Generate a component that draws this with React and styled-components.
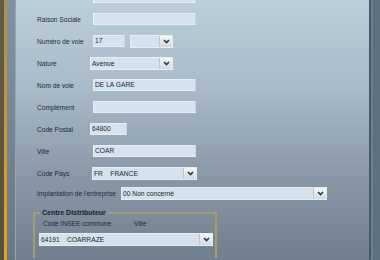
import React from 'react';
import styled, { createGlobalStyle } from 'styled-components';

var Global = createGlobalStyle`
  html, body {
    margin: 0;
    padding: 0;
    width: 380px;
    height: 260px;
    overflow: hidden;
    font-family: "Liberation Sans", Arial, sans-serif;
  }
`;

var Screen = styled.div`
  display: flex;
  width: 380px;
  height: 260px;
  overflow: hidden;
`;

var LeftEdge = styled.div`
  width: 4px;
  background: linear-gradient(#5f5c48, #55523f);
`;

var GoldStripe = styled.div`
  width: 3px;
  background: linear-gradient(#a8904c, #d49a2a 60%, #e8a420);
`;

var Gutter = styled.div`
  width: 8px;
  background: linear-gradient(#8392a0, #6a7886);
  border-right: 1px solid #95a5b3;
`;

var Panel = styled.div`
  flex: 1;
  background: linear-gradient(#bdcedb, #a8b9c7 35%, #8b9baa 65%, #6f7f8e);
  overflow: hidden;
`;

var RightEdge = styled.div`
  width: 9px;
  background: #5e6f80;
  border-left: 2px solid #4a5969;
  box-shadow: inset 2px 0 0 #7688998a;
`;

var Form = styled.div`
  display: flex;
  flex-direction: column;
  margin-top: -14px;
  padding-left: 21px;
`;

var Row = styled.div`
  display: flex;
  align-items: center;
  height: ${(p) => p.h || 22}px;
`;

var Label = styled.div`
  width: ${(p) => p.w || 56}px;
  flex-shrink: 0;
  font-size: 6.6px;
  color: #1d2a36;
  white-space: nowrap;
`;

var Field = styled.div`
  box-sizing: border-box;
  width: ${(p) => p.w}px;
  height: 12px;
  margin-left: ${(p) => p.ml || 0}px;
  background: #d6e3ee;
  border: 1px solid #e6eef5;
  border-right-color: #c9d6e1;
  font-size: 6.7px;
  line-height: 10px;
  padding-left: 1px;
  color: #1a1f26;
  white-space: nowrap;
  overflow: hidden;
`;

var SelectBox = styled.div`
  box-sizing: border-box;
  display: flex;
  align-items: stretch;
  width: ${(p) => p.w}px;
  height: 13px;
  margin-left: ${(p) => p.ml || 0}px;
  background: #d4e2ed;
  border: 1px solid #e4edf4;
  font-size: 6.7px;
  color: #1a1f26;
`;

var SelectText = styled.div`
  flex: 1;
  line-height: 11px;
  padding-left: 1px;
  white-space: pre;
  overflow: hidden;
`;

var ArrowButton = styled.div`
  width: 12px;
  display: flex;
  align-items: center;
  justify-content: center;
  background: linear-gradient(#f4f7f8, #d2d9dd);
  border-left: 1px solid #b9c4cc;
`;

var Group = styled.fieldset`
  box-sizing: border-box;
  width: 184px;
  margin: 7px 0 0 -4px;
  padding: 0 2px 12px 4px;
  border: 2px solid #a29d72;
  border-bottom: none;
  min-width: 0;
`;

var Legend = styled.legend`
  font-size: 7px;
  font-weight: bold;
  color: #17222c;
  padding: 0 2px;
  margin-left: 1px;
`;

var Headers = styled.div`
  display: flex;
  font-size: 6.6px;
  color: #1d2a36;
  height: 12px;
  align-items: center;
  padding-left: 4px;
  margin-top: 1px;
  margin-bottom: 4px;
`;

var HeaderCell = styled.div`
  width: ${(p) => p.w}px;
`;

var Chevron = () => (
  <svg width="7" height="5" viewBox="0 0 7 5">
    <path d="M1 1 L3.5 3.5 L6 1" fill="none" stroke="#2b3640" strokeWidth="1.6" />
  </svg>
);

var Select = ({ w, ml, children }) => (
  <SelectBox w={w} ml={ml}>
    <SelectText>{children}</SelectText>
    <ArrowButton>
      <Chevron />
    </ArrowButton>
  </SelectBox>
);

var App = () => {
  return (
    <Screen>
      <Global />
      <LeftEdge />
      <GoldStripe />
      <Gutter />
      <Panel>
        <Form>
          <Row>
            <Label />
            <Field w={103} />
          </Row>
          <Row>
            <Label>Raison Sociale</Label>
            <Field w={103} />
          </Row>
          <Row>
            <Label>Numéro de voie</Label>
            <Field w={32}>17</Field>
            <Select w={43} ml={5}></Select>
          </Row>
          <Row>
            <Label>Nature</Label>
            <Select w={83} ml={-3}>Avenue</Select>
          </Row>
          <Row>
            <Label>Nom de voie</Label>
            <Field w={103}>DE LA GARE</Field>
          </Row>
          <Row>
            <Label>Complément</Label>
            <Field w={103} />
          </Row>
          <Row>
            <Label>Code Postal</Label>
            <Field w={37} ml={-3}>64800</Field>
          </Row>
          <Row>
            <Label>Ville</Label>
            <Field w={103}>COAR</Field>
          </Row>
          <Row>
            <Label>Code Pays</Label>
            <Select w={105} ml={-1}>{'FR    FRANCE'}</Select>
          </Row>
          <Row h={18}>
            <Label w={84}>Implantation de l'entreprise</Label>
            <Select w={206}>00 Non concerné</Select>
          </Row>
          <Group>
            <Legend>Centre Distributeur</Legend>
            <Headers>
              <HeaderCell w={91}>Code INSEE commune</HeaderCell>
              <HeaderCell w={40}>Ville</HeaderCell>
            </Headers>
            <Select w={174}>{'64191    COARRAZE'}</Select>
          </Group>
        </Form>
      </Panel>
      <RightEdge />
    </Screen>
  );
};

export default App;
